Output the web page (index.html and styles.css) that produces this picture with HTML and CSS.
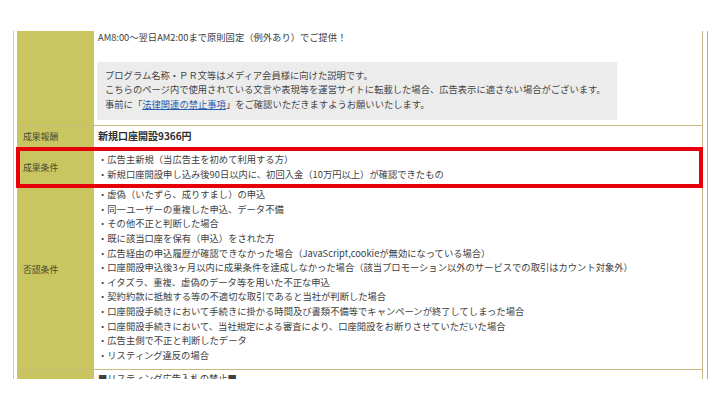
FILE: index.html
```html
<!DOCTYPE html>
<html lang="ja">
<head>
    <meta charset="UTF-8">
    <meta name="viewport" content="width=device-width, initial-scale=1.0">
    <title>プログラム詳細</title>
    <link rel="stylesheet" href="styles.css">
</head>
<body>
    <div class="frame">
        <div class="detail-table">
            <div class="row">
                <div class="th"></div>
                <div class="td intro">
                    <p>AM8:00～翌日AM2:00まで原則固定（例外あり）でご提供！</p>
                    <div class="notice">
                        <p>プログラム名称・ＰＲ文等はメディア会員様に向けた説明です。</p>
                        <p>こちらのページ内で使用されている文言や表現等を運営サイトに転載した場合、広告表示に適さない場合がございます。</p>
                        <p>事前に「<a href="#">法律関連の禁止事項</a>」をご確認いただきますようお願いいたします。</p>
                    </div>
                </div>
            </div>
            <div class="row">
                <div class="th">成果報酬</div>
                <div class="td reward"><strong>新規口座開設9366円</strong></div>
            </div>
            <div class="row highlight">
                <div class="th">成果条件</div>
                <div class="td conditions">
                    <p>・広告主新規（当広告主を初めて利用する方）</p>
                    <p>・新規口座開設申し込み後90日以内に、初回入金（10万円以上）が確認できたもの</p>
                </div>
            </div>
            <div class="row">
                <div class="th th-shift">否認条件</div>
                <div class="td rejects">
                    <p>・虚偽（いたずら、成りすまし）の申込</p>
                    <p>・同一ユーザーの重複した申込、データ不備</p>
                    <p>・その他不正と判断した場合</p>
                    <p>・既に該当口座を保有（申込）をされた方</p>
                    <p>・広告経由の申込履歴が確認できなかった場合（JavaScript,cookieが無効になっている場合）</p>
                    <p>・口座開設申込後3ヶ月以内に成果条件を達成しなかった場合（該当プロモーション以外のサービスでの取引はカウント対象外）</p>
                    <p>・イタズラ、重複、虚偽のデータ等を用いた不正な申込</p>
                    <p>・契約約款に抵触する等の不適切な取引であると当社が判断した場合</p>
                    <p>・口座開設手続きにおいて手続きに掛かる時間及び書類不備等でキャンペーンが終了してしまった場合</p>
                    <p>・口座開設手続きにおいて、当社規定による審査により、口座開設をお断りさせていただいた場合</p>
                    <p>・広告主側で不正と判断したデータ</p>
                    <p>・リスティング違反の場合</p>
                </div>
            </div>
            <div class="row">
                <div class="th"></div>
                <div class="td listing">■リスティング広告入札の禁止■</div>
            </div>
        </div>
    </div>
</body>
</html>
```

FILE: styles.css
```css
:root {
    --olive: #c9c561;
    --line: #c8b97c;
    --text: #404040;
}

* {
    margin: 0;
    padding: 0;
    box-sizing: border-box;
}

body {
    font-family: "Noto Sans CJK JP", "Noto Sans", sans-serif;
    background-color: #ffffff;
    color: var(--text);
    padding-top: 31px;
}

.frame {
    margin-left: 13px;
    width: 695px;
    height: 348px;
    overflow: hidden;
    border-left: 1px solid #d8c99e;
    border-right: 1px solid #b9b862;
    padding: 0 4px 0 3px;
}

.detail-table {
    border-right: 1px solid #c9b48a;
}

.row {
    display: grid;
    grid-template-columns: 77px 1fr;
    border-bottom: 1px solid var(--line);
}

.th {
    background-color: var(--olive);
    color: #4a4a30;
    font-size: 8.8px;
    padding-left: 6px;
    display: flex;
    align-items: center;
}

.th-shift {
    padding-bottom: 18px;
}

.td {
    font-size: 9.3px;
    line-height: 14.6px;
    padding: 0 4px;
}

.intro {
    margin-top: -1px;
    padding-bottom: 5px;
}

.notice {
    background-color: #ececec;
    width: 520px;
    margin-top: 17px;
    margin-left: -1px;
    padding: 6px 6px 9px 8px;
    color: #444;
    white-space: nowrap;
}

.notice a {
    color: #2a5cae;
}

.reward {
    padding-top: 3px;
    padding-bottom: 3px;
    font-size: 10px;
}

.reward strong {
    color: #2e2e2e;
}

.conditions {
    padding-top: 4px;
    padding-bottom: 5px;
}

.highlight {
    position: relative;
    z-index: 1;
    outline: 4px solid #e5000a;
    outline-offset: -3px;
}

.rejects {
    padding-top: 0;
    padding-bottom: 7px;
}

.listing {
    padding-top: 1px;
    height: 30px;
}
```
